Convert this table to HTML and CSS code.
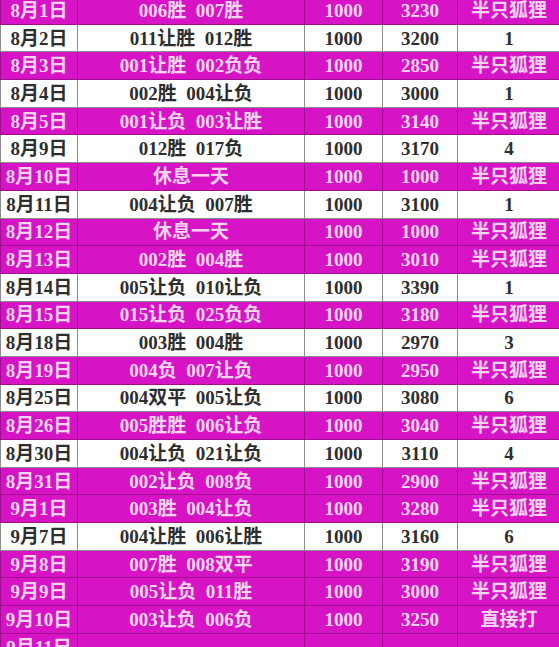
FILE: index.html
```html
<!DOCTYPE html>
<html>
<head>
<meta charset="utf-8">
<link rel="stylesheet" href="styles.css">
</head>
<body>
<table class="sheet">
<colgroup><col class="c1"><col class="c2"><col class="c3"><col class="c4"><col class="c5"></colgroup>
<tbody>
<tr class="m"><td>8月1日</td><td>006胜&nbsp;&nbsp;007胜</td><td>1000</td><td>3230</td><td>半只狐狸</td></tr>
<tr class="w"><td>8月2日</td><td>011让胜&nbsp;&nbsp;012胜</td><td>1000</td><td>3200</td><td>1</td></tr>
<tr class="m"><td>8月3日</td><td>001让胜&nbsp;&nbsp;002负负</td><td>1000</td><td>2850</td><td>半只狐狸</td></tr>
<tr class="w"><td>8月4日</td><td>002胜&nbsp;&nbsp;004让负</td><td>1000</td><td>3000</td><td>1</td></tr>
<tr class="m"><td>8月5日</td><td>001让负&nbsp;&nbsp;003让胜</td><td>1000</td><td>3140</td><td>半只狐狸</td></tr>
<tr class="w"><td>8月9日</td><td>012胜&nbsp;&nbsp;017负</td><td>1000</td><td>3170</td><td>4</td></tr>
<tr class="m"><td>8月10日</td><td>休息一天</td><td>1000</td><td>1000</td><td>半只狐狸</td></tr>
<tr class="w"><td>8月11日</td><td>004让负&nbsp;&nbsp;007胜</td><td>1000</td><td>3100</td><td>1</td></tr>
<tr class="m"><td>8月12日</td><td>休息一天</td><td>1000</td><td>1000</td><td>半只狐狸</td></tr>
<tr class="m"><td>8月13日</td><td>002胜&nbsp;&nbsp;004胜</td><td>1000</td><td>3010</td><td>半只狐狸</td></tr>
<tr class="w"><td>8月14日</td><td>005让负&nbsp;&nbsp;010让负</td><td>1000</td><td>3390</td><td>1</td></tr>
<tr class="m"><td>8月15日</td><td>015让负&nbsp;&nbsp;025负负</td><td>1000</td><td>3180</td><td>半只狐狸</td></tr>
<tr class="w"><td>8月18日</td><td>003胜&nbsp;&nbsp;004胜</td><td>1000</td><td>2970</td><td>3</td></tr>
<tr class="m"><td>8月19日</td><td>004负&nbsp;&nbsp;007让负</td><td>1000</td><td>2950</td><td>半只狐狸</td></tr>
<tr class="w"><td>8月25日</td><td>004双平&nbsp;&nbsp;005让负</td><td>1000</td><td>3080</td><td>6</td></tr>
<tr class="m"><td>8月26日</td><td>005胜胜&nbsp;&nbsp;006让负</td><td>1000</td><td>3040</td><td>半只狐狸</td></tr>
<tr class="w"><td>8月30日</td><td>004让负&nbsp;&nbsp;021让负</td><td>1000</td><td>3110</td><td>4</td></tr>
<tr class="m"><td>8月31日</td><td>002让负&nbsp;&nbsp;008负</td><td>1000</td><td>2900</td><td>半只狐狸</td></tr>
<tr class="m"><td>9月1日</td><td>003胜&nbsp;&nbsp;004让负</td><td>1000</td><td>3280</td><td>半只狐狸</td></tr>
<tr class="w"><td>9月7日</td><td>004让胜&nbsp;&nbsp;006让胜</td><td>1000</td><td>3160</td><td>6</td></tr>
<tr class="m"><td>9月8日</td><td>007胜&nbsp;&nbsp;008双平</td><td>1000</td><td>3190</td><td>半只狐狸</td></tr>
<tr class="m"><td>9月9日</td><td>005让负&nbsp;&nbsp;011胜</td><td>1000</td><td>3000</td><td>半只狐狸</td></tr>
<tr class="m"><td>9月10日</td><td>003让负&nbsp;&nbsp;006负</td><td>1000</td><td>3250</td><td>直接打</td></tr>
<tr class="m"><td>9月11日</td><td></td><td></td><td></td><td></td></tr>
</tbody>
</table>
</body>
</html>
```
FILE: styles.css
```css
html, body {
  margin: 0;
  padding: 0;
  background: #ffffff;
  overflow: hidden;
}
.sheet {
  border-collapse: collapse;
  table-layout: fixed;
  width: 560px;
  margin-top: -4px;
  font-family: "Liberation Serif", "Noto Sans CJK SC", serif;
  font-weight: bold;
  font-size: 19px;
}
.c1 { width: 77px; }
.c2 { width: 227px; }
.c3 { width: 78px; }
.c4 { width: 75px; }
.c5 { width: 103px; }
.sheet td {
  height: 27.7px;
  padding: 0;
  text-align: center;
  vertical-align: middle;
  white-space: nowrap;
  box-sizing: border-box;
  border: 1px solid #8a8a8a;
  line-height: 1;
}
.sheet tr.m td {
  background: #d614c6;
  color: #f6d4f0;
  border-color: #9c1090;
}
.sheet tr.w td {
  background: #ffffff;
  color: #2e2e2e;
  border-color: #8c8c8c;
}
```
